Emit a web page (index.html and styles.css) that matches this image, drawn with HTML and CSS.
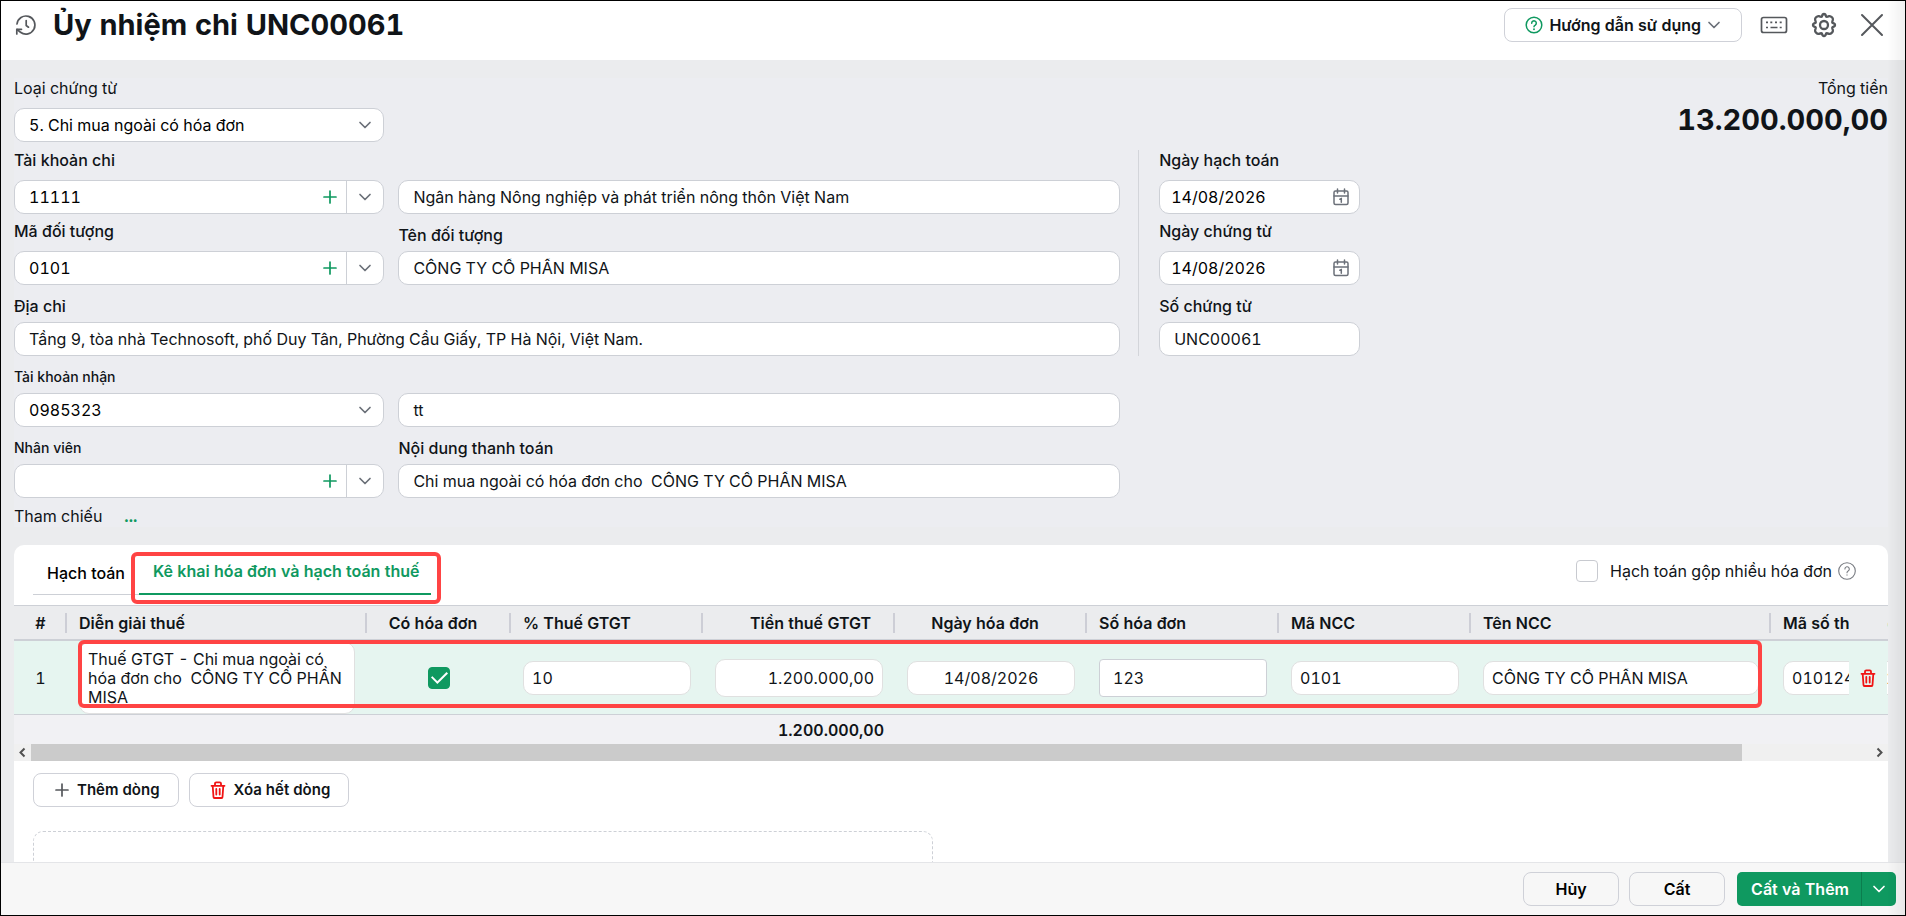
FILE: index.html
```html
<!DOCTYPE html>
<html lang="vi">
<head>
<meta charset="utf-8">
<title>Ủy nhiệm chi UNC00061</title>
<link rel="stylesheet" href="styles.css">
</head>
<body>
<svg class="sprite" aria-hidden="true">
  <symbol id="chevron" viewBox="0 0 14 14"><path d="M2 4.5 7 9.5 12 4.5" fill="none" stroke="currentColor" stroke-width="1.7" stroke-linecap="round" stroke-linejoin="round"/></symbol>
  <symbol id="plus" viewBox="0 0 14 14"><path d="M7 1v12M1 7h12" fill="none" stroke="currentColor" stroke-width="1.7" stroke-linecap="round"/></symbol>
  <symbol id="calendar" viewBox="0 0 16 18"><g fill="none" stroke="currentColor" stroke-width="1.5" stroke-linecap="round"><rect x="1" y="3" width="14" height="13.5" rx="1.5"/><path d="M1 8h14M4.500 1v4M11.500 1v4M6.800 11.300l1.500-.600v3.500"/></g></symbol>
  <symbol id="trash" viewBox="0 0 16 18"><g fill="none" stroke="currentColor" stroke-width="1.800" stroke-linejoin="round" stroke-linecap="round"><path d="M1.500 4.800h13M2.700 5l.8 11a1 1 0 0 0 1 1h7a1 1 0 0 0 1-1l.8-11M5 4.500V2.600a1.200 1.200 0 0 1 1.200-1.200h3.600A1.200 1.200 0 0 1 11 2.600v1.900"/><path d="M6.300 8v5.500M9.700 8v5.500"/></g></symbol>
</svg>
<div class="app">
  <header class="topbar">
    <button class="icon-btn" type="button" aria-label="Lịch sử">
      <svg width="22" height="22" viewBox="0 0 22 22" fill="none" stroke="currentColor" stroke-width="1.700" stroke-linecap="round" stroke-linejoin="round"><path d="M2 10a9 9 0 1 1 3.500 8.200L2 15.500"/><path d="M1.800 20v-4.700h4.700"/><path d="M11.200 6.500v5l2.300 1.700"/></svg>
    </button>
    <h1 class="title">Ủy nhiệm chi UNC00061</h1>
    <div class="tools">
      <button class="btn help" type="button">
        <svg width="18" height="18" viewBox="0 0 18 18" fill="none" stroke="#0f9960" stroke-width="1.500" stroke-linecap="round"><circle cx="9" cy="9" r="7.800"/><path d="M6.700 7.200a2.300 2.300 0 1 1 3.600 1.900c-.8.500-1.300.9-1.300 1.700"/><path d="M9 13.200v.1" stroke-width="1.900"/></svg>
        Hướng dẫn sử dụng
        <svg class="chev" width="14" height="14"><use href="#chevron"/></svg>
      </button>
      <button class="icon-btn" type="button" aria-label="Phím tắt">
        <svg width="28" height="18" viewBox="0 0 28 18" fill="none" stroke="currentColor" stroke-width="1.700"><rect x="1.500" y="1.500" width="25" height="15" rx="2"/><path d="M6 6.300h2M10.300 6.300h2M15 6.300h2M19.700 6.300h2M6 11.500h2M10.500 11.500h7M19.700 11.500h2"/></svg>
      </button>
      <button class="icon-btn" type="button" aria-label="Thiết lập">
        <svg width="26" height="26" viewBox="0 0 26 26" fill="none" stroke="currentColor" stroke-width="2.300" stroke-linejoin="round"><path d="M13 2Q14.600 2 15.100 4.500 15.600 5.200 18.100 4.100 19.600 3.800 20.800 5.200 22.200 6.400 21.900 7.900 20.800 10.400 21.500 10.900 24 11.400 24 13 24 14.600 21.500 15.100 20.800 15.600 21.900 18.100 22.200 19.600 20.800 20.800 19.600 22.200 18.100 21.900 15.600 20.800 15.100 21.500 14.600 24 13 24 11.400 24 10.900 21.500 10.400 20.800 7.900 21.900 6.400 22.200 5.200 20.800 3.800 19.600 4.100 18.100 5.200 15.600 4.500 15.100 2 14.600 2 13 2 11.400 4.500 10.900 5.200 10.400 4.100 7.900 3.800 6.400 5.200 5.200 6.400 3.800 7.900 4.100 10.400 5.200 10.900 4.500 11.400 2 13 2Z"/><circle cx="13" cy="13" r="4"/></svg>
      </button>
      <button class="icon-btn" type="button" aria-label="Đóng">
        <svg width="24" height="24" viewBox="0 0 24 24" fill="none" stroke="currentColor" stroke-width="2" stroke-linecap="round"><path d="M2 2l20 20M22 2 2 22"/></svg>
      </button>
    </div>
  </header>

  <main class="content">
    <form class="voucher">
      <div class="row">
        <div class="field">
          <label for="kind" class="light">Loại chứng từ</label>
          <div class="select"><select id="kind"><option>5. Chi mua ngoài có hóa đơn</option></select><svg class="chev" width="14" height="14"><use href="#chevron"/></svg></div>
        </div>
        <div class="total"><span>Tổng tiền</span><strong>13.200.000,00</strong></div>
      </div>

      <div class="split">
        <div class="main-col">
          <div class="row">
            <div class="field">
              <label for="acc">Tài khoản chi</label>
              <div class="combo"><input id="acc" type="text" value="11111"><button class="add" type="button" aria-label="Thêm"><svg width="14" height="14"><use href="#plus"/></svg></button><button class="drop" type="button" aria-label="Chọn"><svg class="chev" width="14" height="14"><use href="#chevron"/></svg></button></div>
            </div>
            <div class="field"><input class="box" type="text" aria-label="Tên ngân hàng chi" value="Ngân hàng Nông nghiệp và phát triển nông thôn Việt Nam"></div>
          </div>
          <div class="row">
            <div class="field">
              <label for="obj">Mã đối tượng</label>
              <div class="combo"><input id="obj" type="text" value="0101"><button class="add" type="button" aria-label="Thêm"><svg width="14" height="14"><use href="#plus"/></svg></button><button class="drop" type="button" aria-label="Chọn"><svg class="chev" width="14" height="14"><use href="#chevron"/></svg></button></div>
            </div>
            <div class="field close"><label for="objname">Tên đối tượng</label><input id="objname" class="box" type="text" value="CÔNG TY CỔ PHẦN MISA"></div>
          </div>
          <div class="row">
            <div class="field close wide"><label for="addr">Địa chỉ</label><input id="addr" class="box" type="text" value="Tầng 9, tòa nhà Technosoft, phố Duy Tân, Phường Cầu Giấy, TP Hà Nội, Việt Nam."></div>
          </div>
        </div>
        <div class="side-col">
          <div class="field"><label for="d1">Ngày hạch toán</label><div class="date"><input id="d1" type="text" value="14/08/2026"><button type="button" aria-label="Chọn ngày"><svg width="16" height="18"><use href="#calendar"/></svg></button></div></div>
          <div class="field"><label for="d2">Ngày chứng từ</label><div class="date"><input id="d2" type="text" value="14/08/2026"><button type="button" aria-label="Chọn ngày"><svg width="16" height="18"><use href="#calendar"/></svg></button></div></div>
          <div class="field close"><label for="no">Số chứng từ</label><input id="no" class="box" type="text" value="UNC00061"></div>
        </div>
      </div>

      <div class="split">
        <div class="main-col">
          <div class="row">
            <div class="field close">
              <label for="recv" class="small">Tài khoản nhận</label>
              <div class="select"><select id="recv"><option>0985323</option></select><svg class="chev" width="14" height="14"><use href="#chevron"/></svg></div>
            </div>
            <div class="field"><input class="box" type="text" aria-label="Ngân hàng nhận" value="tt"></div>
          </div>
          <div class="row">
            <div class="field close">
              <label for="emp" class="small">Nhân viên</label>
              <div class="combo"><input id="emp" type="text" value=""><button class="add" type="button" aria-label="Thêm"><svg width="14" height="14"><use href="#plus"/></svg></button><button class="drop" type="button" aria-label="Chọn"><svg class="chev" width="14" height="14"><use href="#chevron"/></svg></button></div>
            </div>
            <div class="field close"><label for="memo">Nội dung thanh toán</label><input id="memo" class="box" type="text" value="Chi mua ngoài có hóa đơn cho  CÔNG TY CỔ PHẦN MISA"></div>
          </div>
        </div>
      </div>
      <div class="refs"><span>Tham chiếu</span><a href="#">...</a></div>
    </form>

    <section class="panel">
      <div class="panel-head">
        <nav class="tabs">
          <button class="tab" type="button">Hạch toán</button>
          <div class="tab-slot"><button class="tab active" type="button">Kê khai hóa đơn và hạch toán thuế</button><span class="mark mark-tab"></span></div>
        </nav>
        <label class="merge"><input class="check" type="checkbox">Hạch toán gộp nhiều hóa đơn
          <svg width="18" height="18" viewBox="0 0 18 18" fill="none" stroke="#777a80" stroke-width="1.100" stroke-linecap="round"><circle cx="9" cy="9" r="8.300"/><path d="M6.900 7a2.200 2.200 0 1 1 3.300 1.900c-.8.500-1.200.9-1.200 1.800M9 12.900v.2"/></svg>
        </label>
      </div>

      <div class="grid-wrap">
        <div class="grid-scroll">
          <table>
            <colgroup><col class="c-no"><col class="c-desc"><col class="c-flag"><col class="c-std"><col class="c-std"><col class="c-std"><col class="c-std"><col class="c-std"><col class="c-desc"><col class="c-tax"><col class="c-std"><col class="c-act"></colgroup>
            <thead>
              <tr><th class="mid no">#</th><th>Diễn giải thuế</th><th class="mid">Có hóa đơn</th><th>% Thuế GTGT</th><th class="end">Tiền thuế GTGT</th><th class="mid">Ngày hóa đơn</th><th>Số hóa đơn</th><th>Mã NCC</th><th>Tên NCC</th><th>Mã số thuế</th><th>Số CT</th><th class="act"></th></tr>
            </thead>
            <tbody>
              <tr>
                <td class="no">1</td>
                <td><textarea class="cell" rows="3" aria-label="Diễn giải thuế">Thuế GTGT - Chi mua ngoài có hóa đơn cho  CÔNG TY CỔ PHẦN MISA</textarea></td>
                <td class="mid"><input class="check" type="checkbox" checked aria-label="Có hóa đơn"></td>
                <td><input class="cell" type="text" aria-label="% Thuế GTGT" value="10"></td>
                <td><input class="cell tall end" type="text" aria-label="Tiền thuế GTGT" value="1.200.000,00"></td>
                <td><input class="cell mid" type="text" aria-label="Ngày hóa đơn" value="14/08/2026"></td>
                <td><input class="cell tall plain" type="text" aria-label="Số hóa đơn" value="123"></td>
                <td><input class="cell" type="text" aria-label="Mã NCC" value="0101"></td>
                <td><input class="cell" type="text" aria-label="Tên NCC" value="CÔNG TY CỔ PHẦN MISA"></td>
                <td class="clip"><input class="cell long" type="text" aria-label="Mã số thuế" value="0101243150"></td>
                <td><input class="cell" type="text" aria-label="Số CT" value="1"></td>
                <td class="act"><button type="button" aria-label="Xóa dòng"><svg width="16" height="18"><use href="#trash"/></svg></button></td>
              </tr>
            </tbody>
            <tfoot>
              <tr><td colspan="4"></td><td class="sum">1.200.000,00</td><td colspan="7"></td></tr>
            </tfoot>
          </table>
        </div>
        <span class="mark mark-row"></span>
        <div class="scrollbar">
          <svg width="17" height="17" viewBox="0 0 17 17" fill="none" stroke="#505050" stroke-width="2"><path d="M10.500 4.500 6.500 8.500l4 4"/></svg>
          <div class="track"><div class="thumb"></div></div>
          <svg width="17" height="17" viewBox="0 0 17 17" fill="none" stroke="#505050" stroke-width="2"><path d="M6.500 4.500l4 4-4 4"/></svg>
        </div>
      </div>

      <div class="row-actions">
        <button class="btn" type="button"><svg width="14" height="14" class="gray"><use href="#plus"/></svg>Thêm dòng</button>
        <button class="btn" type="button"><svg width="16" height="18" class="red"><use href="#trash"/></svg>Xóa hết dòng</button>
      </div>
      <div class="dropzone"></div>
    </section>
  </main>

  <footer class="bottombar">
    <button class="btn act-btn" type="button">Hủy</button>
    <button class="btn act-btn" type="button">Cất</button>
    <div class="save"><button type="button">Cất và Thêm</button><button class="more" type="button" aria-label="Thêm lựa chọn"><svg width="14" height="14"><use href="#chevron"/></svg></button></div>
  </footer>
</div>
</body>
</html>
```
FILE: styles.css
```css
* { box-sizing: border-box; }
body {
  margin: 0;
  font: 16px/20px Inter, "Noto Sans", sans-serif;
  font-variant-numeric: tabular-nums;
  color: #101418;
}
button, input, select, textarea { font: inherit; font-variant-numeric: inherit; color: inherit; margin: 0; }
input { line-height: 30px; }
button { background: none; border: 0; padding: 0; cursor: pointer; }
svg { display: block; flex: none; }
.sprite { position: absolute; width: 0; height: 0; }

.app {
  position: relative;
  display: flex;
  flex-direction: column;
  height: 100vh;
  border: 1px solid #000;
  background: #ebecee;
  overflow: hidden;
}
.app::after {
  content: "";
  position: absolute;
  inset: 0 0 0 auto;
  width: 18px;
  background: linear-gradient(to right, transparent, rgba(0, 0, 0, .06));
  pointer-events: none;
}

.topbar {
  display: flex;
  align-items: center;
  gap: 16px;
  flex: none;
  padding: 0 21px 12px 14px;
  height: 59px;
  background: #fff;
}
.title { margin: 0; font-size: 29px; line-height: 36px; font-weight: 700; }
.tools { display: flex; align-items: center; gap: 23px; margin-left: auto; }
.icon-btn { color: #55585c; }
.chev { color: #6b7079; }
.btn {
  display: flex;
  align-items: center;
  justify-content: center;
  gap: 8px;
  height: 34px;
  border: 1px solid #cfd1d8;
  border-radius: 8px;
  background: #fff;
  font-weight: 600;
}
.help { gap: 6px; padding: 0 20px; margin-right: -5px; }

.content { flex: 1; min-height: 0; overflow: hidden; padding: 18px 17px 0 13px; }

.voucher { background: #ecedf1; }
.row { display: grid; grid-template-columns: 370fr 721fr; gap: 14px; align-items: end; min-height: 64px; }
.voucher > .row { grid-template-columns: 370fr 1490fr; margin-bottom: 8px; }
.field { display: flex; flex-direction: column; gap: 10px; min-width: 0; }
.field.close { gap: 6px; }
.wide { grid-column: 1 / -1; }
.field label { font-weight: 500; }
.field label.light { font-weight: 400; }
.field label.small { font-size: 14px; }
.box, .combo, .select select, .date {
  width: 100%;
  height: 34px;
  border: 1px solid #cdd0d6;
  border-radius: 10px;
  background: #fff;
}
.box { padding: 0 14px; }
.combo, .date { display: flex; align-items: stretch; }
.combo input, .date input { flex: 1; min-width: 0; border: 0; background: none; padding: 0 14px; outline: 0; color: #000; }
.date input { padding: 0 11px; }
.date button { padding: 0 10px; color: #6b7079; }
.add { padding: 0 9px; color: #0f9960; }
.drop { padding: 0 11px; border-left: 1px solid #cdd0d6; }
.select { display: grid; align-items: center; }
.select > * { grid-area: 1 / 1; }
.select select { appearance: none; padding: 0 14px; color: #000; }
.select svg { justify-self: end; margin-right: 12px; pointer-events: none; }

.total { display: flex; flex-direction: column; align-items: flex-end; align-self: start; gap: 2px; }
.total strong { font-size: 29px; line-height: 40px; font-weight: 700; }

.split { display: grid; grid-template-columns: 1105fr 222fr 509fr; gap: 18px; margin-bottom: 7px; }
.main-col, .side-col { display: flex; flex-direction: column; gap: 7px; min-width: 0; }
.side-col { border-left: 1px solid #d3d5da; padding-left: 20px; }
.side-col .field { min-height: 64px; justify-content: flex-end; }
.refs { display: flex; gap: 22px; line-height: 22px; }
.refs a { color: #0f9960; font-weight: 700; text-decoration: none; }

.panel { margin-top: 18px; background: #fff; border-radius: 10px 10px 0 0; }
.panel-head { display: flex; justify-content: space-between; height: 60px; padding: 0 32px 0 19px; }
.tabs { display: flex; align-items: flex-start; }
.tab { height: 50px; border-bottom: 1px solid #cdd0d6; padding: 6px 14px 0; font-weight: 500; color: #000; }
.tab-slot { position: relative; }
.tab.active { border-bottom: 2px solid #0f9960; color: #0f9960; font-weight: 600; padding: 4px 12px 0 14px; }
.mark { position: absolute; border: 4px solid #ff4444; border-radius: 6px; pointer-events: none; }
.mark-tab { inset: 7px -10px -9px -8px; }
.merge { display: flex; align-items: center; height: 52px; gap: 6px; }
.check {
  appearance: none;
  display: inline-grid;
  place-items: center;
  width: 22px;
  height: 22px;
  border: 1px solid #c8cad0;
  border-radius: 4px;
  background: #fff;
  vertical-align: middle;
}
.merge .check { margin-right: 6px; }
.check:checked { background: #0f9960; border-color: #0f9960; }
.check:checked::before {
  content: "";
  width: 13px;
  height: 7px;
  margin-bottom: 5px;
  border: solid #fff;
  border-width: 0 0 2px 2px;
  transform: rotate(-45deg);
}

.grid-wrap { position: relative; }
.grid-scroll { overflow: hidden; }
table { width: 2081px; table-layout: fixed; border-collapse: separate; border-spacing: 0; }
.c-no { width: 53px; }
.c-desc { width: 300px; }
.c-flag { width: 144px; }
.c-std { width: 192px; }
.c-tax { width: 94px; }
.c-act { width: 38px; }
th, td { padding: 0 12px; text-align: left; }
th {
  height: 36px;
  padding-right: 24px;
  border-top: 1px solid #cdd0d6;
  border-bottom: 2px solid #cdd0d6;
  background: linear-gradient(#cdced6, #cdced6) right center / 2px 20px no-repeat #ebecee;
  font-weight: 600;
  overflow: hidden;
  white-space: nowrap;
}
.mid { text-align: center; }
.end { text-align: right; }
th.no, td.no { padding: 0; text-align: center; }
th:nth-child(10) { padding-right: 0; background-image: none; }
tbody td { height: 74px; background: #e6f5f0; border-bottom: 1px solid #cdd0d6; }
.clip { overflow: hidden; }
.cell {
  display: block;
  width: 100%;
  height: 34px;
  border: 1px solid #e0e0e0;
  border-radius: 10px;
  background: #fff;
  padding: 0 8px;
}
.cell.tall { height: 38px; }
.cell.long { width: 168px; }
.cell.plain { border-color: #cdd0d6; border-radius: 4px; padding: 0 13px; }
textarea.cell { height: 72px; resize: none; overflow: hidden; line-height: 19px; padding: 7px 8px 0; }
.act { position: sticky; right: 1px; padding: 0; }
th.act { background: #ebecee; }
.act button { display: block; margin: 0 auto; color: #f01414; }
tfoot td { height: 29px; background: #f1f1f4; }
tfoot .sum { padding-right: 11px; text-align: right; font-weight: 600; }
.mark-row { left: 64px; top: 35px; width: 1684px; height: 68px; }
.scrollbar { display: flex; height: 17px; background: #f0f0f0; }
.track { flex: 1; }
.thumb { width: 93%; height: 100%; background: #cbcbcb; }

.row-actions { display: flex; gap: 10px; padding: 12px 19px 24px; font-size: 15px; }
.row-actions .btn { padding: 0 18px 0 21px; }
.row-actions .btn + .btn { padding: 0 18px 0 20px; }
.gray { color: #55585c; }
.red { color: #f01414; }
.dropzone { width: 48%; height: 120px; margin-left: 19px; border: 1px dashed #cdd0d6; border-radius: 10px; }

.bottombar {
  display: flex;
  justify-content: flex-end;
  gap: 10px;
  flex: none;
  padding: 9px 9px;
  border-top: 1px solid #e4e5e8;
  background: #f7f7f7;
}
.act-btn { width: 96px; background: none; color: #000; }
.save { display: flex; margin-left: 2px; border-radius: 5px; background: #0f9960; color: #fff; font-weight: 600; }
.save button { padding: 0 12px 0 14px; font-weight: 600; }
.save .more { padding: 0 10px; border-left: 1px solid #0b7d4e; }
```
